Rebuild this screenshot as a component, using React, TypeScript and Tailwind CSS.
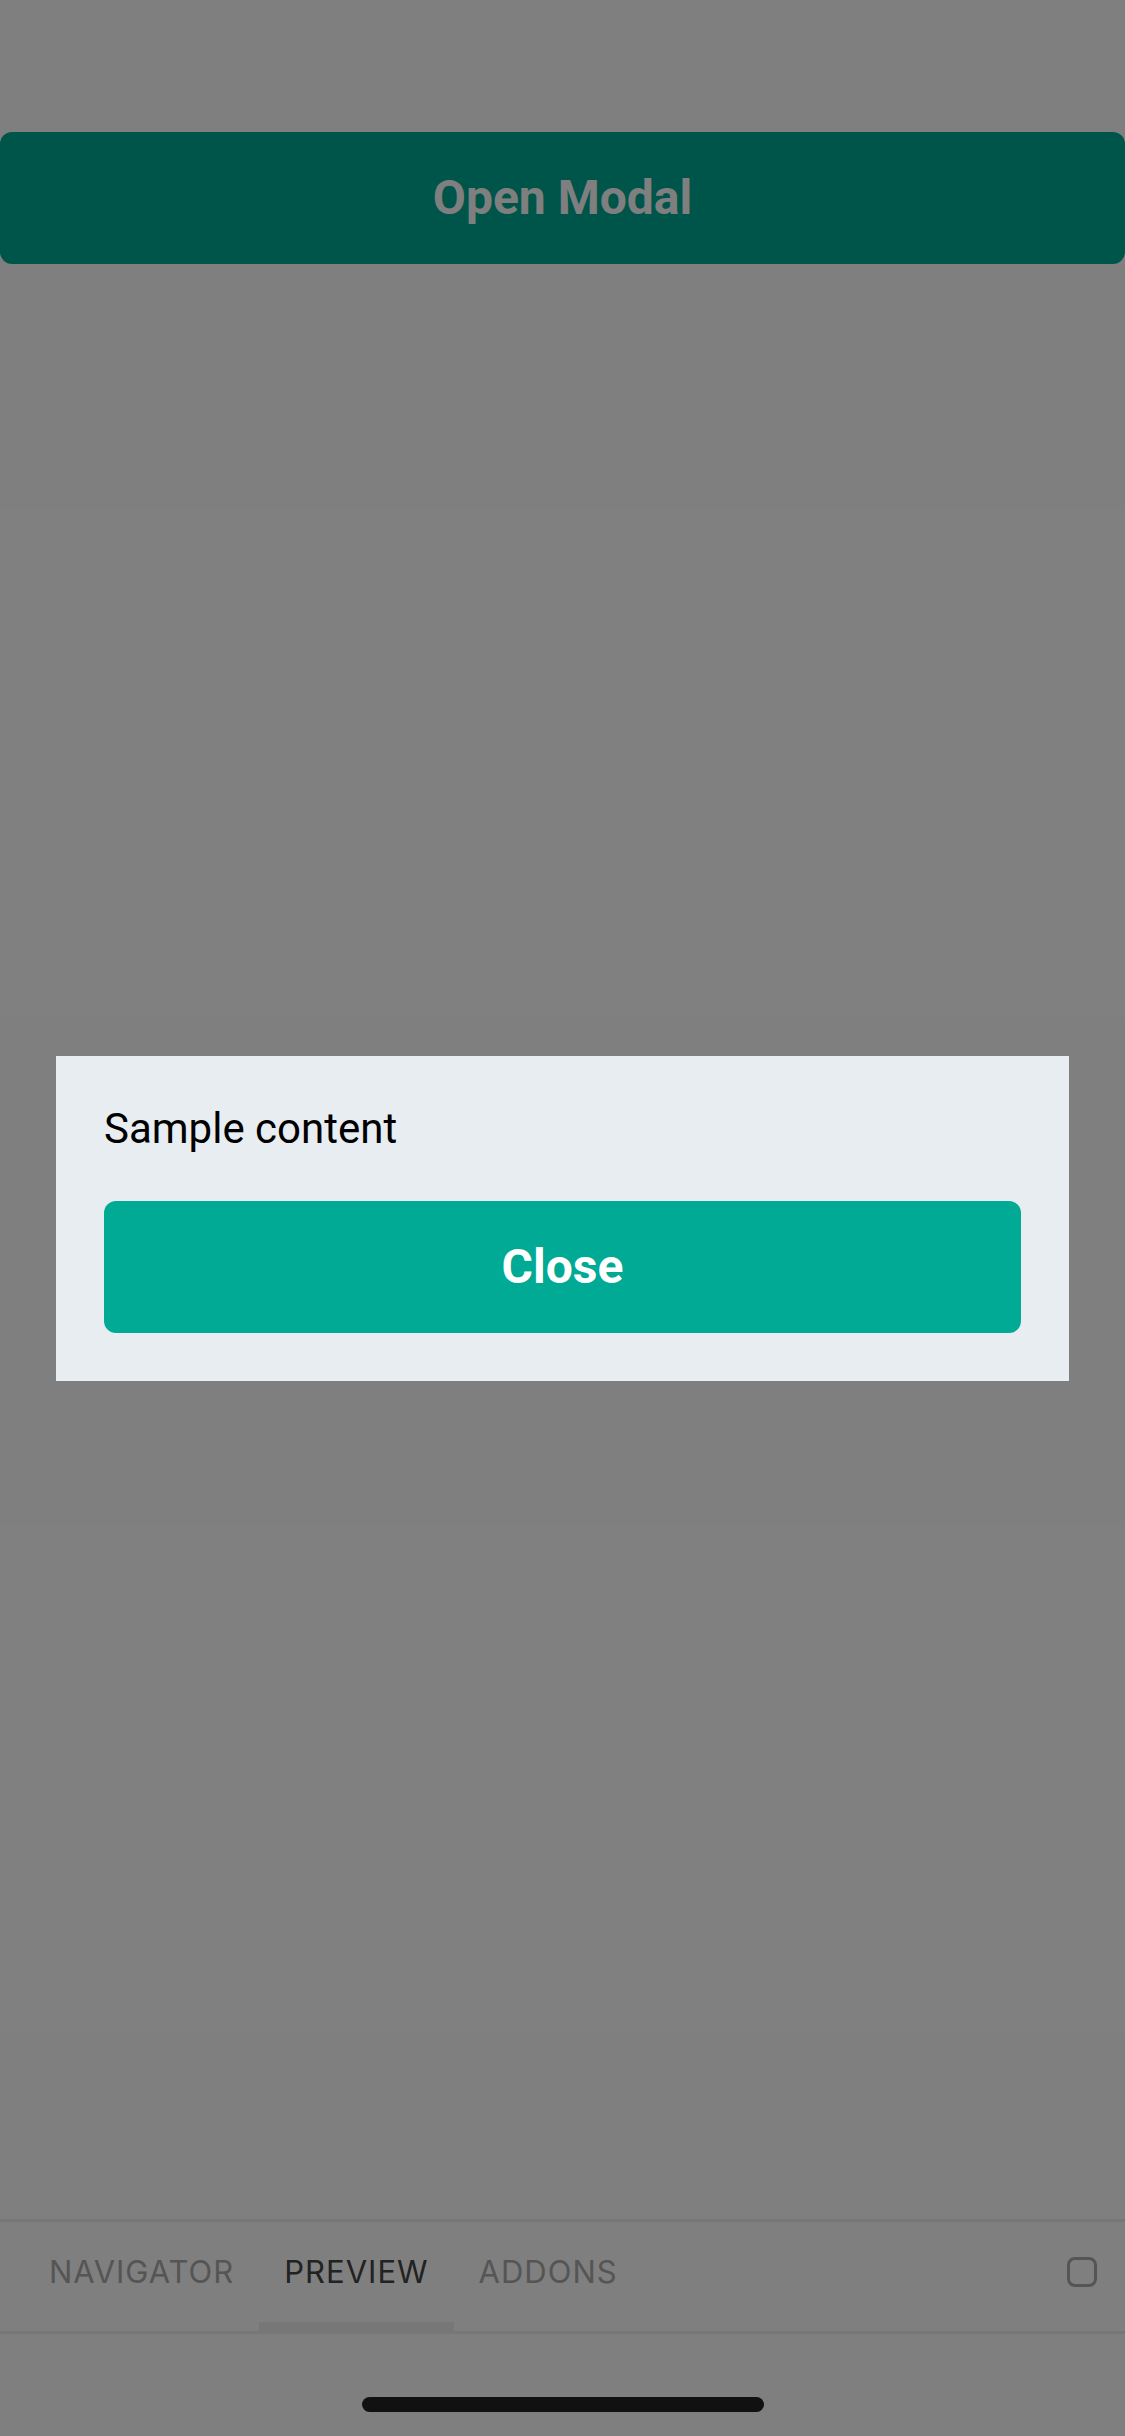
import { useState } from "react";

const tabs = ["NAVIGATOR", "PREVIEW", "ADDONS"];

export default function App() {
  const [open, setOpen] = useState(true);
  const [active, setActive] = useState("PREVIEW");

  return (
    <div className="relative flex h-[2436px] w-full flex-col bg-white">
      {/* status bar space */}
      <div className="h-[132px]" />

      <button
        onClick={() => setOpen(true)}
        className="flex h-[132px] w-full items-center justify-center rounded-[12px] bg-[#00aa94] font-['Roboto',sans-serif] text-[48px] font-bold text-white"
      >
        Open Modal
      </button>

      <div className="flex-1" />

      {/* storybook tab bar */}
      <div className="flex h-[115px] items-stretch border-y-[3px] border-[#eeeeee] bg-white pl-[24px] pr-[28px] font-['Inter',sans-serif]">
        {tabs.map((t) => (
          <button
            key={t}
            onClick={() => setActive(t)}
            className={`relative flex items-center px-[25px] pb-[9px] text-[31px] tracking-[1px] ${
              active === t ? "text-[#444444]" : "text-[#aaaaaa]"
            }`}
          >
            {t}
            {active === t && <span className="absolute inset-x-0 bottom-0 h-[9px] bg-[#eeeeee]" />}
          </button>
        ))}
        <div className="flex-1" />
        <div className="flex items-center pb-[9px]">
          <div className="h-[30px] w-[30px] rounded-[8px] border-[3px] border-[#aaaaaa]" />
        </div>
      </div>

      {/* home indicator area */}
      <div className="flex h-[102px] justify-center bg-white pt-[63px]">
        <div className="h-[15px] w-[402px] rounded-full bg-[#222222]" />
      </div>

      {open && (
        <div className="absolute inset-0 flex items-center justify-center bg-black/50 px-[56px]">
          <div className="flex w-full flex-col gap-[48px] bg-[#e8edf1] p-[48px] font-['Roboto',sans-serif]">
            <p className="text-[42px] leading-[49px] text-black">Sample content</p>
            <button
              onClick={() => setOpen(false)}
              className="flex h-[132px] w-full items-center justify-center rounded-[12px] bg-[#00aa94] text-[48px] font-bold text-white"
            >
              Close
            </button>
          </div>
        </div>
      )}
    </div>
  );
}
